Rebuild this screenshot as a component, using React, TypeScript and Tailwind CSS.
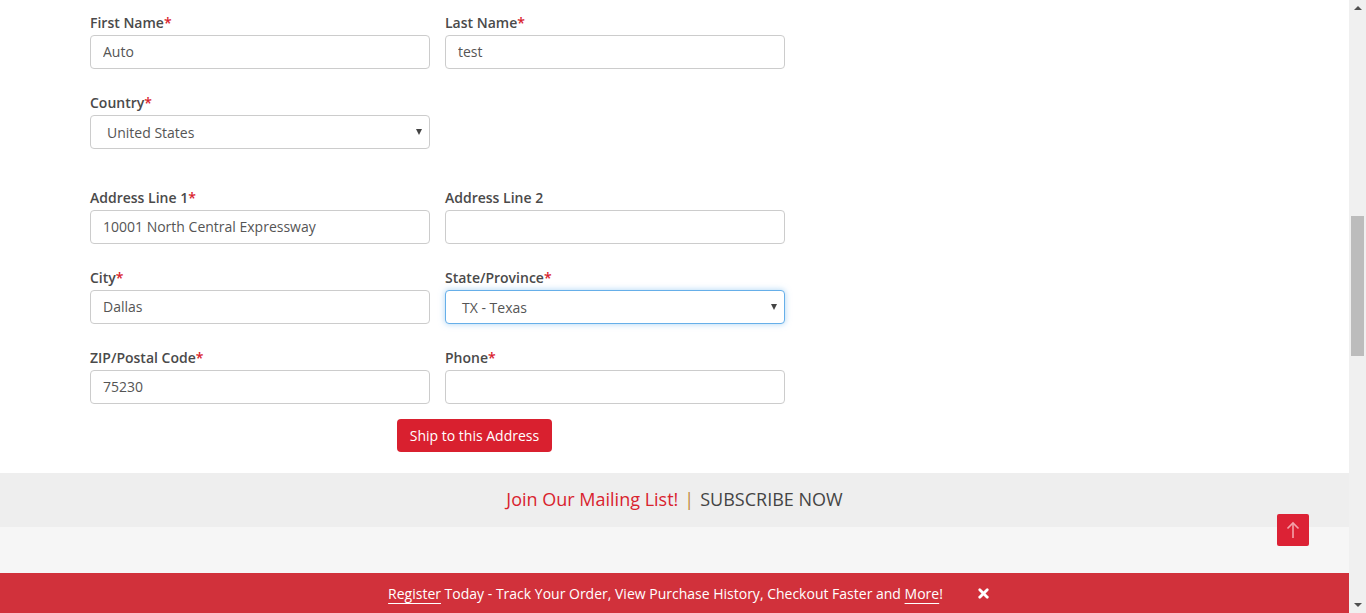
import React from "react";
import { X } from "lucide-react";

const font = { fontFamily: '"Open Sans", "Liberation Sans", sans-serif' };

const Label = ({ text, required }: { text: string; required?: boolean }) => (
  <label className="block text-[14px] leading-[20px] font-semibold text-[#4a4a4a] pt-[1px] mb-[2px]">
    {text}
    {required && <span className="text-[#d9232e]">*</span>}
  </label>
);

const TextField = ({ label, value, required }: { label: string; value: string; required?: boolean }) => (
  <div className="w-[340px]">
    <Label text={label} required={required} />
    <input
      readOnly
      value={value}
      className="block w-full h-[34px] px-[12px] pb-[1px] text-[14px] text-[#555] bg-white border border-[#ccc] rounded-[4px] outline-none"
    />
  </div>
);

const SelectField = ({ label, value, focused }: { label: string; value: string; focused?: boolean }) => (
  <div className="w-[340px]">
    <Label text={label} required />
    <div
      className={`relative h-[34px] rounded-[4px] border bg-white flex items-center pl-[16px] ${
        focused ? "border-[#66afe9] shadow-[0_0_6px_rgba(102,175,233,0.55)]" : "border-[#ccc]"
      }`}
    >
      <span className="text-[14px] text-[#555]">{value}</span>
      <span className="absolute right-[7px] top-[13px] w-0 h-0 border-l-[3px] border-r-[3px] border-t-[6px] border-l-transparent border-r-transparent border-t-[#444]" />
    </div>
  </div>
);

const Row = ({ children, top }: { children: React.ReactNode; top: string }) => (
  <div className={`flex gap-[15px] ${top}`}>{children}</div>
);

export default function App() {
  return (
    <div className="flex h-[613px] overflow-hidden bg-white" style={font}>
      <div className="flex-1 flex flex-col relative">
        <div className="pl-[90px] pt-[12px] pb-[21px]">
          <Row top="">
            <TextField label="First Name" value="Auto" required />
            <TextField label="Last Name" value="test" required />
          </Row>
          <Row top="mt-[23px]">
            <SelectField label="Country" value="United States" />
          </Row>
          <Row top="mt-[38px]">
            <TextField label="Address Line 1" value="10001 North Central Expressway" required />
            <TextField label="Address Line 2" value="" />
          </Row>
          <Row top="mt-[23px]">
            <TextField label="City" value="Dallas" required />
            <SelectField label="State/Province" value="TX - Texas" focused />
          </Row>
          <Row top="mt-[23px]">
            <TextField label="ZIP/Postal Code" value="75230" required />
            <TextField label="Phone" value="" required />
          </Row>
          <div className="mt-[15px] ml-[307px]">
            <button className="h-[33px] w-[155px] rounded-[4px] bg-[#d9202f] text-white text-[14px]">
              Ship to this Address
            </button>
          </div>
        </div>

        <div className="h-[54px] bg-[#eeeeee] flex items-center justify-center text-[18px] pb-[1px]">
          <span className="text-[#d9232e]">Join Our Mailing List!</span>
          <span className="text-[#c0873a] mx-[6px]">|</span>
          <span className="text-[#444]">SUBSCRIBE NOW</span>
        </div>
        <div className="h-[46px] bg-[#f6f6f6]" />
        <div className="h-[40px] bg-[#d1313b] flex items-center justify-center text-white text-[14px] pl-[30px]">
          <span>
            <span className="underline underline-offset-[4px]">Register</span> Today - Track Your Order, View Purchase
            History, Checkout Faster and <span className="underline underline-offset-[4px]">More</span>!
          </span>
          <X className="ml-[33px] w-[15px] h-[15px]" strokeWidth={4.5} />
        </div>

        <button className="absolute left-[1277px] top-[514px] w-[32px] h-[32px] rounded-[2px] bg-[#dc2235] flex items-center justify-center">
          <svg width="14" height="18" viewBox="0 0 14 18" fill="none" stroke="#f4a3ab" strokeWidth="1.6">
            <path d="M7 17V2" />
            <path d="M1.5 7.5L7 2l5.5 5.5" />
          </svg>
        </button>
      </div>

      <div className="w-[17px] bg-[#f0f0f0] relative">
        <span className="absolute left-[5px] top-[6px] w-0 h-0 border-l-[4px] border-r-[4px] border-b-[4px] border-l-transparent border-r-transparent border-b-[#505050]" />
        <div className="absolute left-[2px] top-[216px] w-[13px] h-[140px] bg-[#bcbcbc]" />
        <span className="absolute left-[5px] bottom-[6px] w-0 h-0 border-l-[4px] border-r-[4px] border-t-[4px] border-l-transparent border-r-transparent border-t-[#505050]" />
      </div>
    </div>
  );
}
